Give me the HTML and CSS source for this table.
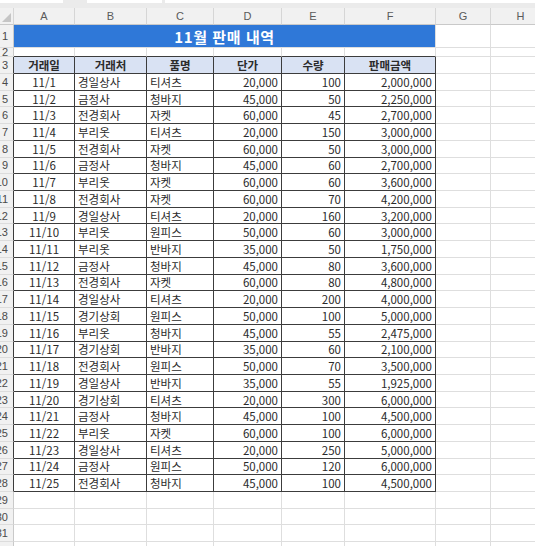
FILE: index.html
```html
<!DOCTYPE html>
<html lang="ko">
<head>
<meta charset="utf-8">
<link rel="stylesheet" href="styles.css">
</head>
<body>
<div class="ribbon"><span class="box b1"></span><span class="box b2"></span><span class="box b3"></span></div>
<div class="sheet">
  <div class="ch corner"><span class="tri"></span></div><div class="ch">A</div><div class="ch">B</div><div class="ch">C</div><div class="ch">D</div><div class="ch">E</div><div class="ch">F</div><div class="ch">G</div><div class="ch">H</div>

  <div class="rh">1</div><div class="c title">11월 판매 내역</div><div class="c"></div><div class="c"></div>
  <div class="rh">2</div><div class="c ab"></div><div class="c ab"></div><div class="c ab"></div><div class="c ab"></div><div class="c ab"></div><div class="c ab"></div><div class="c"></div><div class="c"></div>
  <div class="rh rt">3</div><div class="c t th">거래일</div><div class="c t th">거래처</div><div class="c t th">품명</div><div class="c t th">단가</div><div class="c t th">수량</div><div class="c t th">판매금액</div><div class="c"></div><div class="c"></div>

  <div class="rh rt">4</div><div class="c t m">11/1</div><div class="c t l">경일상사</div><div class="c t l">티셔츠</div><div class="c t r">20,000</div><div class="c t r">100</div><div class="c t r">2,000,000</div><div class="c"></div><div class="c"></div>
  <div class="rh rt">5</div><div class="c t m">11/2</div><div class="c t l">금정사</div><div class="c t l">청바지</div><div class="c t r">45,000</div><div class="c t r">50</div><div class="c t r">2,250,000</div><div class="c"></div><div class="c"></div>
  <div class="rh rt">6</div><div class="c t m">11/3</div><div class="c t l">전경회사</div><div class="c t l">자켓</div><div class="c t r">60,000</div><div class="c t r">45</div><div class="c t r">2,700,000</div><div class="c"></div><div class="c"></div>
  <div class="rh rt">7</div><div class="c t m">11/4</div><div class="c t l">부리옷</div><div class="c t l">티셔츠</div><div class="c t r">20,000</div><div class="c t r">150</div><div class="c t r">3,000,000</div><div class="c"></div><div class="c"></div>
  <div class="rh rt">8</div><div class="c t m">11/5</div><div class="c t l">전경회사</div><div class="c t l">자켓</div><div class="c t r">60,000</div><div class="c t r">50</div><div class="c t r">3,000,000</div><div class="c"></div><div class="c"></div>
  <div class="rh rt">9</div><div class="c t m">11/6</div><div class="c t l">금정사</div><div class="c t l">청바지</div><div class="c t r">45,000</div><div class="c t r">60</div><div class="c t r">2,700,000</div><div class="c"></div><div class="c"></div>
  <div class="rh rt">10</div><div class="c t m">11/7</div><div class="c t l">부리옷</div><div class="c t l">자켓</div><div class="c t r">60,000</div><div class="c t r">60</div><div class="c t r">3,600,000</div><div class="c"></div><div class="c"></div>
  <div class="rh rt">11</div><div class="c t m">11/8</div><div class="c t l">전경회사</div><div class="c t l">자켓</div><div class="c t r">60,000</div><div class="c t r">70</div><div class="c t r">4,200,000</div><div class="c"></div><div class="c"></div>
  <div class="rh rt">12</div><div class="c t m">11/9</div><div class="c t l">경일상사</div><div class="c t l">티셔츠</div><div class="c t r">20,000</div><div class="c t r">160</div><div class="c t r">3,200,000</div><div class="c"></div><div class="c"></div>
  <div class="rh rt">13</div><div class="c t m">11/10</div><div class="c t l">부리옷</div><div class="c t l">원피스</div><div class="c t r">50,000</div><div class="c t r">60</div><div class="c t r">3,000,000</div><div class="c"></div><div class="c"></div>
  <div class="rh rt">14</div><div class="c t m">11/11</div><div class="c t l">부리옷</div><div class="c t l">반바지</div><div class="c t r">35,000</div><div class="c t r">50</div><div class="c t r">1,750,000</div><div class="c"></div><div class="c"></div>
  <div class="rh rt">15</div><div class="c t m">11/12</div><div class="c t l">금정사</div><div class="c t l">청바지</div><div class="c t r">45,000</div><div class="c t r">80</div><div class="c t r">3,600,000</div><div class="c"></div><div class="c"></div>
  <div class="rh rt">16</div><div class="c t m">11/13</div><div class="c t l">전경회사</div><div class="c t l">자켓</div><div class="c t r">60,000</div><div class="c t r">80</div><div class="c t r">4,800,000</div><div class="c"></div><div class="c"></div>
  <div class="rh rt">17</div><div class="c t m">11/14</div><div class="c t l">경일상사</div><div class="c t l">티셔츠</div><div class="c t r">20,000</div><div class="c t r">200</div><div class="c t r">4,000,000</div><div class="c"></div><div class="c"></div>
  <div class="rh rt">18</div><div class="c t m">11/15</div><div class="c t l">경기상회</div><div class="c t l">원피스</div><div class="c t r">50,000</div><div class="c t r">100</div><div class="c t r">5,000,000</div><div class="c"></div><div class="c"></div>
  <div class="rh rt">19</div><div class="c t m">11/16</div><div class="c t l">부리옷</div><div class="c t l">청바지</div><div class="c t r">45,000</div><div class="c t r">55</div><div class="c t r">2,475,000</div><div class="c"></div><div class="c"></div>
  <div class="rh rt">20</div><div class="c t m">11/17</div><div class="c t l">경기상회</div><div class="c t l">반바지</div><div class="c t r">35,000</div><div class="c t r">60</div><div class="c t r">2,100,000</div><div class="c"></div><div class="c"></div>
  <div class="rh rt">21</div><div class="c t m">11/18</div><div class="c t l">전경회사</div><div class="c t l">원피스</div><div class="c t r">50,000</div><div class="c t r">70</div><div class="c t r">3,500,000</div><div class="c"></div><div class="c"></div>
  <div class="rh rt">22</div><div class="c t m">11/19</div><div class="c t l">경일상사</div><div class="c t l">반바지</div><div class="c t r">35,000</div><div class="c t r">55</div><div class="c t r">1,925,000</div><div class="c"></div><div class="c"></div>
  <div class="rh rt">23</div><div class="c t m">11/20</div><div class="c t l">경기상회</div><div class="c t l">티셔츠</div><div class="c t r">20,000</div><div class="c t r">300</div><div class="c t r">6,000,000</div><div class="c"></div><div class="c"></div>
  <div class="rh rt">24</div><div class="c t m">11/21</div><div class="c t l">금정사</div><div class="c t l">청바지</div><div class="c t r">45,000</div><div class="c t r">100</div><div class="c t r">4,500,000</div><div class="c"></div><div class="c"></div>
  <div class="rh rt">25</div><div class="c t m">11/22</div><div class="c t l">부리옷</div><div class="c t l">자켓</div><div class="c t r">60,000</div><div class="c t r">100</div><div class="c t r">6,000,000</div><div class="c"></div><div class="c"></div>
  <div class="rh rt">26</div><div class="c t m">11/23</div><div class="c t l">경일상사</div><div class="c t l">티셔츠</div><div class="c t r">20,000</div><div class="c t r">250</div><div class="c t r">5,000,000</div><div class="c"></div><div class="c"></div>
  <div class="rh rt">27</div><div class="c t m">11/24</div><div class="c t l">금정사</div><div class="c t l">원피스</div><div class="c t r">50,000</div><div class="c t r">120</div><div class="c t r">6,000,000</div><div class="c"></div><div class="c"></div>
  <div class="rh rt">28</div><div class="c t m">11/25</div><div class="c t l">전경회사</div><div class="c t l">청바지</div><div class="c t r">45,000</div><div class="c t r">100</div><div class="c t r">4,500,000</div><div class="c"></div><div class="c"></div>

  <div class="rh">29</div><div class="c"></div><div class="c"></div><div class="c"></div><div class="c"></div><div class="c"></div><div class="c"></div><div class="c"></div><div class="c"></div>
  <div class="rh">30</div><div class="c"></div><div class="c"></div><div class="c"></div><div class="c"></div><div class="c"></div><div class="c"></div><div class="c"></div><div class="c"></div>
  <div class="rh">31</div><div class="c"></div><div class="c"></div><div class="c"></div><div class="c"></div><div class="c"></div><div class="c"></div><div class="c"></div><div class="c"></div>
  <div class="rh">32</div><div class="c"></div><div class="c"></div><div class="c"></div><div class="c"></div><div class="c"></div><div class="c"></div><div class="c"></div><div class="c"></div>
</div>
</body>
</html>
```

FILE: styles.css
```css
html, body {
  margin: 0;
  padding: 0;
  background: #ffffff;
  overflow: hidden;
}
body {
  width: 535px;
  height: 546px;
  font-family: "Noto Sans CJK KR", "Noto Sans", sans-serif;
  color: #2b2b2b;
}
.ribbon {
  height: 8px;
  background: #ebebeb;
  display: flex;
  align-items: flex-start;
  gap: 0;
}
.box {
  height: 3px;
  background: #ffffff;
  display: block;
}
.b1 { width: 63px; margin-right: 24px; }
.b2 { width: 75px; margin-right: 3px; }
.b3 { flex: 1; }

.sheet {
  display: grid;
  grid-template-columns: 14px 61px 72px 67px 68px 63px 91px 55px 60px;
  grid-template-rows: 17px 23px 9px 17px repeat(29, 16.72px);
}
.sheet > div {
  box-sizing: border-box;
  overflow: hidden;
  white-space: nowrap;
}
.ch {
  background: #f1f1f1;
  border-right: 1px solid #d6d6d6;
  border-bottom: 1px solid #c9c9c9;
  font-family: "Liberation Sans", sans-serif;
  font-size: 11px;
  color: #5a5a5a;
  display: flex;
  align-items: center;
  justify-content: center;
}
.corner {
  position: relative;
}
.tri {
  position: absolute;
  right: 2px;
  bottom: 2px;
  width: 0;
  height: 0;
  border-left: 9px solid transparent;
  border-bottom: 9px solid #c5c5c5;
}
.rh {
  background: #f1f1f1;
  border-right: 1px solid #c9c9c9;
  border-bottom: 1px solid #dcdcdc;
  font-family: "Liberation Sans", sans-serif;
  font-size: 11px;
  color: #4a4a4a;
  display: flex;
  align-items: center;
  justify-content: flex-end;
  padding-right: 5px;
}
.rh.rt {
  border-right-color: #3c3c3c;
}
.c {
  border-right: 1px solid #dedede;
  border-bottom: 1px solid #dedede;
  font-size: 11.5px;
  display: flex;
  align-items: center;
  padding: 0 3px;
}
.c.ab {
  border-bottom-color: #3c3c3c;
}
.c.t {
  border-right-color: #3c3c3c;
  border-bottom-color: #3c3c3c;
}
.title {
  grid-column: span 6;
  background: #2f78d8;
  color: #ffffff;
  font-weight: 700;
  font-size: 15px;
  justify-content: center;
  letter-spacing: 0.6px;
}
.th {
  background: #d9e2f3;
  font-weight: 700;
  justify-content: center;
}
.m { justify-content: center; }
.l { justify-content: flex-start; }
.r { justify-content: flex-end; }
```
